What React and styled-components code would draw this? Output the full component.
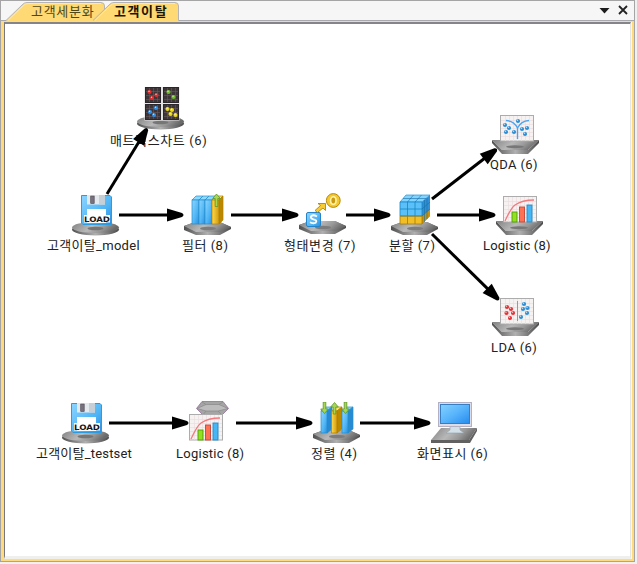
import React from 'react';
import styled, { createGlobalStyle } from 'styled-components';

const GlobalStyle = createGlobalStyle`
  * { box-sizing: border-box; }
  body { margin: 0; background: #f0f0f0; }
`;

const Page = styled.div`
  width: 637px;
  height: 564px;
  padding-right: 2px;
  background: #f0f0f0;
  font-family: Roboto, "Noto Sans CJK KR", sans-serif;
  color: #222;
`;

const Window = styled.div`
  display: flex;
  flex-direction: column;
  height: 562px;
  border: 1px solid #a5a5a5;
  background: #f6f6f6;
`;

const TabBar = styled.div`
  display: flex;
  flex: 0 0 20px;
  height: 20px;
  border-bottom: 1px solid #a9a9ad;
`;

const Tabs = styled.div`
  display: flex;
  flex: 1;
  height: 20px;
  padding-left: 5px;
`;

const TabItem = styled.div`
  position: relative;
  width: ${(p) => p.$width}px;
  height: 20px;
  margin-right: ${(p) => p.$overlap || 0}px;
  padding-left: ${(p) => p.$pad}px;
  font-size: 13px;
  line-height: 22px;
  letter-spacing: ${(p) => p.$spacing}px;
  font-weight: ${(p) => (p.$active ? 700 : 400)};
  color: ${(p) => (p.$active ? '#1c1600' : '#514716')};
  white-space: nowrap;
`;

const TabShape = styled.svg`
  position: absolute;
  left: 0;
  top: 0;
`;

const TabText = styled.span`
  position: relative;
`;

const TabControls = styled.div`
  display: flex;
  align-items: center;
  gap: 8px;
  padding: 0 6px 1px 0;
`;

const Frame = styled.div`
  flex: 1;
  display: flex;
  padding: 0 1px 0 0;
  border: solid #ffdb7b;
  border-width: 1px 2px 2px 3px;
  background: #fff7e4;
`;

const Canvas = styled.div`
  position: relative;
  flex: 1;
  overflow: hidden;
  border: 1px solid #e5e5e5;
  border-top: 2px solid #858589;
  border-left: 1px solid #77777c;
  border-bottom: 3px solid #efefed;
  background: #fff;
`;

const Surface = styled.div`
  position: absolute;
  left: -5px;
  top: -24px;
  width: 637px;
  height: 564px;
`;

const NodeIcon = styled.svg`
  position: absolute;
  left: ${(p) => p.$x}px;
  top: ${(p) => p.$y}px;
`;

const NodeLabel = styled.div`
  position: absolute;
  left: ${(p) => p.$x}px;
  top: ${(p) => p.$y - 9}px;
  height: 18px;
  font-size: 13px;
  line-height: 18px;
  letter-spacing: ${(p) => p.$spacing}px;
  white-space: nowrap;
`;

const Links = styled.svg`
  position: absolute;
  left: 0;
  top: 0;
`;

const LoadText = styled.text`
  font-family: "DejaVu Sans", sans-serif;
  font-size: 7.5px;
  font-weight: 700;
  fill: #151515;
`;

function Tab({ label, width, active, overlap, pad, spacing }) {
  return (
    <TabItem $width={width} $active={active} $overlap={overlap} $pad={pad} $spacing={spacing}>
      <TabShape width={width} height="20">
        <path d={`M0 19.5 L16 4 Q18 1.5 21 1.5 H${width - 4} Q${width - 0.5} 1.5 ${width - 0.5} 5 V20 H0Z`} fill="#ffd974" />
        <path d={`M0 19.5 L16 4 Q18 1.5 21 1.5 H${width - 4} Q${width - 0.5} 1.5 ${width - 0.5} 5 V19.5`} fill="none" stroke="#b4b4b8" />
        <path d={`M2 19.5 L17 5 Q19 2.5 22 2.5 H${width - 4}`} fill="none" stroke="#ffe9a8" />
      </TabShape>
      <TabText>{label}</TabText>
    </TabItem>
  );
}

const Defs = () => (
  <svg width="0" height="0">
    <defs>
      <linearGradient id="metal" x1="0" x2="1" y2="0.25">
        <stop offset="0" stopColor="#808080" />
        <stop offset="0.48" stopColor="#b8b8b8" />
        <stop offset="0.75" stopColor="#989898" />
        <stop offset="1" stopColor="#6a6a6a" />
      </linearGradient>
      <linearGradient id="rim" x1="0" x2="1">
        <stop offset="0" stopColor="#505050" />
        <stop offset="0.5" stopColor="#b0b0b0" />
        <stop offset="1" stopColor="#4c4c4c" />
      </linearGradient>
      <linearGradient id="blue" x1="0" y1="0" x2="1" y2="1">
        <stop offset="0" stopColor="#8dd5ff" />
        <stop offset="0.6" stopColor="#4fb5f5" />
        <stop offset="1" stopColor="#2b8fe0" />
      </linearGradient>
      <linearGradient id="gold" x2="1">
        <stop offset="0" stopColor="#ffd94a" />
        <stop offset="1" stopColor="#d19c10" />
      </linearGradient>
      <linearGradient id="screen" x1="0" y1="0" x2="1" y2="1">
        <stop offset="0" stopColor="#86d2ff" />
        <stop offset="0.5" stopColor="#58b4fb" />
        <stop offset="1" stopColor="#258bed" />
      </linearGradient>
    </defs>
  </svg>
);

const Disc = () => (
  <g>
    <ellipse cx="23.5" cy="35.5" rx="23.5" ry="6" fill="url(#rim)" />
    <ellipse cx="23.5" cy="33.5" rx="23.5" ry="5.5" fill="url(#metal)" />
    <ellipse cx="23.5" cy="34.5" rx="8" ry="1.8" fill="#767676" />
  </g>
);

const HexBase = () => (
  <g>
    <path d="M0 32 L11 28 H36 L47 33 V35 L36 41 H12 L0 36Z" fill="url(#rim)" />
    <path d="M0 32 L11 28 H36 L47 33 L36 38 H12Z" fill="url(#metal)" />
    <ellipse cx="24" cy="34.5" rx="8" ry="1.8" fill="#7c7c7c" />
  </g>
);

const Tray = () => (
  <g>
    <path d="M0 27 H47 L36 37 H10Z" fill="url(#metal)" />
    <path d="M0 27 L10 37 H36 L47 27 V30 L36 41 H10 L0 30Z" fill="url(#rim)" />
    <ellipse cx="23" cy="33.8" rx="9" ry="1.5" fill="#777" />
  </g>
);

const Panel = ({ x = 8, y = 2, children }) => (
  <g transform={`translate(${x} ${y})`}>
    <rect x="0.5" y="0.5" width="33" height="25.5" fill="#f7f2f2" stroke="#acacac" />
    <path d="M5.5 1V26 M9.5 1V26 M13.5 1V26 M17.5 1V26 M21.5 1V26 M25.5 1V26 M29.5 1V26 M1 5.5H33 M1 9.5H33 M1 13.5H33 M1 17.5H33 M1 21.5H33" stroke="#eadddf" strokeWidth="0.7" />
    {children}
  </g>
);

const Dots = ({ points, color, r = 2.1 }) =>
  points.map(([x, y]) => (
    <g key={`${x}-${y}`}>
      <circle cx={x} cy={y} r={r} fill={color} />
      <circle cx={x - 0.5} cy={y - 0.7} r={r * 0.35} fill="#fff" opacity="0.7" />
    </g>
  ));

const LoadIcon = () => (
  <g>
    <Disc />
    <path d="M9.5 1.5H38L39.5 3V30.5H11L9.5 29Z" fill="url(#blue)" stroke="#2d9bdf" />
    <rect x="15" y="1" width="18" height="9.5" fill="#e4e9ed" />
    <rect x="18.7" y="2" width="3.5" height="7.5" fill="#77717d" stroke="#4c4653" strokeWidth="0.6" />
    <rect x="27" y="1" width="6" height="9.5" fill="#c6ced6" />
    <rect x="15" y="15" width="19" height="14" fill="#fff" />
    <rect x="12" y="21" width="26" height="7.5" fill="#fff" />
    <LoadText x="12" y="28" textLength="26" lengthAdjust="spacingAndGlyphs">LOAD</LoadText>
  </g>
);

const Book = ({ x, y, w, h, gold, side = 4 }) => (
  <g transform={`translate(${x} ${y})`} stroke={gold ? '#b27e00' : '#278dca'} strokeWidth="0.7">
    <path d={`M0 4 L${side} 0 H${w + side} L${w} 4Z`} fill={gold ? '#ffe369' : '#8dd9ff'} />
    <path d={`M${w} 4 L${w + side} 0 V${h - 4} L${w} ${h}Z`} fill={gold ? '#ba8900' : '#278bd4'} />
    <rect y="4" width={w} height={h - 4} fill={gold ? 'url(#gold)' : 'url(#blue)'} />
  </g>
);

const GreenArrow = ({ x, y, down, length = 12 }) => (
  <path
    transform={`translate(${x} ${y}) ${down ? `translate(0 ${length}) scale(1 -1)` : ''}`}
    d={`M-1.3 ${length} V5 H-3.8 L0 0.5 L3.8 5 H1.3 V${length}Z`}
    fill="#a8d653"
    stroke="#5b9529"
    strokeWidth="0.8"
  />
);

const FilterIcon = () => (
  <g>
    <HexBase />
    <Book x={8} y={2} w={7} h={28} />
    <Book x={15} y={2} w={6} h={28} />
    <Book x={21} y={2} w={7} h={28} />
    <Book x={28} y={2} w={7} h={28} gold />
    <GreenArrow x={32.5} y={-0.5} length={13} />
  </g>
);

const TransformIcon = () => (
  <g>
    <HexBase />
    <rect x="7.5" y="19.5" width="14" height="14" rx="1.5" fill="url(#blue)" stroke="#2583ca" />
    <path d="M18 23.5 Q14.5 21.3 12.3 22.9 Q10.7 25.3 14.5 26.3 Q18.7 27.2 16.7 29.7 Q14 31 11 29.3" fill="none" stroke="#fff" strokeWidth="1.8" />
    <path d="M16 17.5 L21.5 12.5 L19 10.5 H26.5 V17.5 L24 15 L18.5 19.5Z" fill="#f7cb36" stroke="#a97a00" strokeWidth="0.8" />
    <circle cx="34.3" cy="7.5" r="6.9" fill="#f4c92d" stroke="#b88908" />
    <ellipse cx="34.3" cy="7.5" rx="2.7" ry="3.7" fill="#c99a12" stroke="#fff3ac" strokeWidth="1.6" />
  </g>
);

const SplitIcon = () => (
  <g>
    <HexBase />
    <path d="M9 8 L15 1 H39 L31 8Z" fill="#80d4ff" stroke="#2394d3" strokeWidth="0.7" />
    <path d="M31 8 L39 1 V22 L31 30Z" fill="#318fd4" />
    <path d="M9 8H31V22H9Z" fill="#5cc0f8" />
    <path d="M31 22L39 15V22L31 30Z" fill="#c79109" />
    <path d="M9 22H31V30H9Z" fill="#f1bf25" />
    <path d="M9 8H31V22H9Z M16.5 8V22 M24 8V22 M9 15H31" fill="none" stroke="#1585c5" strokeWidth="0.8" />
    <path d="M9 22H31V30H9Z M16.5 22V30 M24 22V30" fill="none" stroke="#a87800" strokeWidth="0.8" />
    <path d="M33.5 6V28 M36 4V25 M31 15L39 8 M31 22L39 15 M16.5 8L22.5 1 M24 8L30.5 1 M12 4.5H35" fill="none" stroke="#176fa7" strokeWidth="0.6" />
  </g>
);

const QdaIcon = () => (
  <g>
    <Tray />
    <Panel>
      <path d="M6 5.5 Q14 6 17.5 13 Q21 6 29 5.5 M17.5 13V24" fill="none" stroke="#4ca4ef" strokeWidth="1.4" />
      <Dots color="#2e8fd4" points={[[5, 10], [9, 13], [6, 17], [14, 17], [18, 6], [22, 14], [27, 13], [25, 19]]} />
    </Panel>
  </g>
);

const LdaIcon = () => (
  <g>
    <Tray />
    <Panel y={3}>
      <path d="M17.5 3V23" stroke="#999" />
      <Dots color="#e53035" points={[[7, 9], [11, 11], [6.5, 15], [13, 15], [10, 20]]} />
      <Dots color="#2e8fd4" points={[[24, 6], [23, 11], [27.5, 10], [27, 15], [21, 19]]} />
    </Panel>
  </g>
);

const RegressionPanel = ({ x, y }) => (
  <Panel x={x} y={y}>
    <rect x="9" y="16" width="5" height="10" fill="#94df20" stroke="#4d9f00" strokeWidth="0.9" />
    <rect x="16.5" y="11" width="5" height="15" fill="#ff7155" stroke="#c84532" strokeWidth="0.9" />
    <rect x="24" y="9" width="5" height="17" fill="#46b6f5" stroke="#238bc8" strokeWidth="0.9" />
    <path d="M2 25 Q8 12 12 9 Q19 4 31 4" fill="none" stroke="#f17c7f" strokeWidth="1.3" />
  </Panel>
);

const LogisticIcon = () => <g><Tray /><RegressionPanel x={7} y={2} /></g>;

const LogisticModelIcon = () => (
  <g>
    <path d="M7.5 7.5 L13 0.5H34L39.5 7.5L33 14H14Z" fill="#a5a5a5" stroke="#9b6d9d" strokeWidth="0.8" />
    <path d="M8 7.5L17 3.5H30L39 7.5L29 10H17ZM13 1L17 3.5M34 1L30 3.5M17 10L14 14M29 10L33 14" fill="#bcbcbc" stroke="#888" strokeWidth="0.7" />
    <RegressionPanel x={0} y={13} />
  </g>
);

const SortIcon = () => (
  <g>
    <HexBase />
    <Book x={8} y={5} w={6} h={26} side={5} />
    <Book x={18.5} y={5} w={5.5} h={26} gold side={5} />
    <Book x={29} y={5} w={6} h={26} side={5} />
    <GreenArrow x={11.5} y={0} down />
    <GreenArrow x={21.5} y={0} />
    <GreenArrow x={32.5} y={0} down />
  </g>
);

const DisplayIcon = () => (
  <g>
    <path d="M10 26H46L38 38H0Z" fill="url(#metal)" />
    <path d="M0 38H38L46 26V29L39 41H0Z" fill="#616161" />
    <path d="M19 22H29V28L33 31H15L19 28Z" fill="#d3e0e8" stroke="#93a0a9" strokeWidth="0.6" />
    <rect x="7.5" y="0.5" width="33" height="24" fill="#dddce6" stroke="#b4b0c4" />
    <rect x="9.5" y="2.5" width="29" height="19" fill="url(#screen)" stroke="#377dc2" />
  </g>
);

const MatrixIcon = () => (
  <g>
    <g transform="translate(0 1)"><Disc /></g>
    <rect x="7.5" width="35" height="33.5" fill="#e2e2e2" />
    {[[8, 0], [26, 0], [8, 17], [26, 17]].map(([x, y]) => (
      <g key={`${x}-${y}`} transform={`translate(${x} ${y})`}>
        <rect x="0.5" y="0.5" width="15" height="15" fill="#3d3538" stroke="#2a2629" />
        <path d="M4.5 1V15 M8.5 1V15 M12.5 1V15 M1 4.5H15 M1 8.5H15 M1 12.5H15" stroke="#695b61" strokeWidth="0.6" />
      </g>
    ))}
    <Dots color="#e52b2e" points={[[12.5, 5], [15, 11], [19.5, 8]]} />
    <Dots color="#6fbb2b" points={[[31.5, 5], [36.5, 10]]} />
    <Dots color="#328ee0" points={[[13, 25], [19, 21], [17, 28]]} />
    <Dots color="#e9d71c" points={[[30.5, 22], [35, 23], [33.5, 27], [38.5, 28]]} />
  </g>
);

const NODES = [
  { Icon: MatrixIcon, x: 137, y: 87, label: '매트릭스차트 (6)', lx: 110, ly: 141, spacing: 0.6 },
  { Icon: LoadIcon, x: 72, y: 194, label: '고객이탈_model', lx: 47, ly: 246, spacing: 0.3 },
  { Icon: FilterIcon, x: 184, y: 194, label: '필터 (8)', lx: 182, ly: 246, spacing: 0.5 },
  { Icon: TransformIcon, x: 299, y: 193, label: '형태변경 (7)', lx: 284, ly: 246, spacing: 0.6 },
  { Icon: SplitIcon, x: 391, y: 194, label: '분할 (7)', lx: 389, ly: 246, spacing: 0.5 },
  { Icon: QdaIcon, x: 492, y: 113, label: 'QDA (6)', lx: 490, ly: 165, spacing: 0.35 },
  { Icon: LogisticIcon, x: 496, y: 194, label: 'Logistic (8)', lx: 483, ly: 246, spacing: 0.2 },
  { Icon: LdaIcon, x: 492, y: 295, label: 'LDA (6)', lx: 491, ly: 348, spacing: 0.4 },
  { Icon: LoadIcon, x: 62, y: 402, label: '고객이탈_testset', lx: 36, ly: 454, spacing: 0.2 },
  { Icon: LogisticModelIcon, x: 189, y: 401, label: 'Logistic (8)', lx: 176, ly: 454, spacing: 0.25 },
  { Icon: SortIcon, x: 313, y: 402, label: '정렬 (4)', lx: 311, ly: 454, spacing: 0.5 },
  { Icon: DisplayIcon, x: 431, y: 402, label: '화면표시 (6)', lx: 417, ly: 454, spacing: 0.5 },
];

const LINKS = [
  [107, 194, 148, 127],
  [119, 215, 185, 215],
  [231, 215, 300, 215],
  [346, 215, 392, 215],
  [437, 215, 497, 215],
  [432, 199, 498, 148],
  [432, 234, 500, 301],
  [109, 423, 190, 423],
  [236, 423, 314, 423],
  [360, 423, 432, 423],
];

function Arrow({ from: [x1, y1], to: [x2, y2] }) {
  const length = Math.hypot(x2 - x1, y2 - y1);
  const angle = (Math.atan2(y2 - y1, x2 - x1) * 180) / Math.PI;
  return (
    <g transform={`translate(${x1} ${y1}) rotate(${angle})`}>
      <path d={`M0 0H${length - 14}`} stroke="#000" strokeWidth="3" />
      <path d={`M${length - 18} -6.5 L${length - 3} -2 Q${length} 0 ${length - 3} 2 L${length - 18} 6.5Z`} />
    </g>
  );
}

export default function App() {
  return (
    <Page>
      <GlobalStyle />
      <Window>
        <TabBar>
          <Tabs>
            <Tab label="고객세분화" width={99} overlap={-12} pad={25} spacing={0.7} />
            <Tab label="고객이탈" width={86} pad={21} spacing={1.6} active />
          </Tabs>
          <TabControls>
            <svg width="11" height="12"><path d="M0.5 4H10.5L5.5 9.5Z" fill="#1c1c1c" /></svg>
            <svg width="10" height="10"><path d="M1 1L9 9M9 1L1 9" stroke="#222" strokeWidth="1.8" /></svg>
          </TabControls>
        </TabBar>
        <Frame>
          <Canvas>
            <Surface>
              <Defs />
              {NODES.map(({ Icon, x, y }) => (
                <NodeIcon key={`${x}-${y}`} $x={x} $y={y} width="48" height="45"><Icon /></NodeIcon>
              ))}
              {NODES.map(({ label, lx, ly, spacing }) => (
                <NodeLabel key={`${lx}-${ly}`} $x={lx} $y={ly} $spacing={spacing}>{label}</NodeLabel>
              ))}
              <Links width="637" height="564">
                {LINKS.map(([x1, y1, x2, y2]) => (
                  <Arrow key={`${x1}-${y1}-${x2}-${y2}`} from={[x1, y1]} to={[x2, y2]} />
                ))}
              </Links>
            </Surface>
          </Canvas>
        </Frame>
      </Window>
    </Page>
  );
}
